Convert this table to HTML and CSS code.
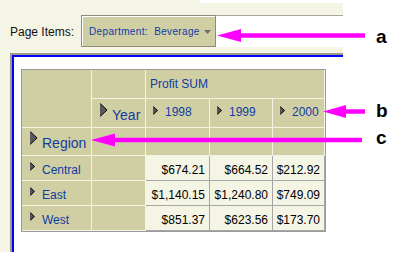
FILE: index.html
```html
<!DOCTYPE html>
<html>
<head>
<meta charset="utf-8">
<link rel="stylesheet" href="styles.css">
</head>
<body>
<div class="screen">
  <div class="page-items">
    <span class="pi-label">Page Items:</span>
    <div class="pi-box">
      <span class="pi-text">Department:&nbsp; Beverage</span>
      <svg class="pi-caret" width="7" height="4" viewBox="0 0 7 4"><polygon points="0,0 7,0 3.5,4" fill="#6e6e6e"/></svg>
    </div>
  </div>
  <div class="panel">
    <div class="panel-inner">
      <table class="pivot">
        <colgroup><col class="c1"><col class="c2"><col class="c3"><col class="c4"><col class="c5"></colgroup>
        <tr class="r-h">
          <td class="hd" rowspan="2"></td>
          <td class="hd"></td>
          <td class="hd measure" colspan="3">Profit SUM</td>
        </tr>
        <tr class="r-h">
          <td class="hd dim"><svg class="tri-lg" width="8" height="14" viewBox="0 0 8 14"><polygon points="0,0 7.5,7 0,14" fill="#5a5a5a"/><polyline points="0.5,0.8 7,7 0.5,13.2" fill="none" stroke="#111" stroke-width="1"/></svg>Year</td>
          <td class="hd year"><svg class="tri-sm" width="5" height="9" viewBox="0 0 5 9"><polygon points="0,0 5,4.5 0,9" fill="#555"/><polyline points="0.5,0.8 4.5,4.5 0.5,8.2" fill="none" stroke="#111" stroke-width="1"/></svg>1998</td>
          <td class="hd year"><svg class="tri-sm" width="5" height="9" viewBox="0 0 5 9"><polygon points="0,0 5,4.5 0,9" fill="#555"/><polyline points="0.5,0.8 4.5,4.5 0.5,8.2" fill="none" stroke="#111" stroke-width="1"/></svg>1999</td>
          <td class="hd year"><svg class="tri-sm" width="5" height="9" viewBox="0 0 5 9"><polygon points="0,0 5,4.5 0,9" fill="#555"/><polyline points="0.5,0.8 4.5,4.5 0.5,8.2" fill="none" stroke="#111" stroke-width="1"/></svg>2000</td>
        </tr>
        <tr class="r-reg">
          <td class="hd dim"><svg class="tri-lg" width="8" height="14" viewBox="0 0 8 14"><polygon points="0,0 7.5,7 0,14" fill="#5a5a5a"/><polyline points="0.5,0.8 7,7 0.5,13.2" fill="none" stroke="#111" stroke-width="1"/></svg>Region</td>
          <td class="hd"></td><td class="hd"></td><td class="hd"></td><td class="hd"></td>
        </tr>
        <tr class="r-d">
          <td class="hd row"><svg class="tri-sm" width="5" height="9" viewBox="0 0 5 9"><polygon points="0,0 5,4.5 0,9" fill="#555"/><polyline points="0.5,0.8 4.5,4.5 0.5,8.2" fill="none" stroke="#111" stroke-width="1"/></svg>Central</td>
          <td class="hd"></td>
          <td class="num">$674.21</td><td class="num">$664.52</td><td class="num">$212.92</td>
        </tr>
        <tr class="r-d">
          <td class="hd row"><svg class="tri-sm" width="5" height="9" viewBox="0 0 5 9"><polygon points="0,0 5,4.5 0,9" fill="#555"/><polyline points="0.5,0.8 4.5,4.5 0.5,8.2" fill="none" stroke="#111" stroke-width="1"/></svg>East</td>
          <td class="hd"></td>
          <td class="num">$1,140.15</td><td class="num">$1,240.80</td><td class="num">$749.09</td>
        </tr>
        <tr class="r-d">
          <td class="hd row"><svg class="tri-sm" width="5" height="9" viewBox="0 0 5 9"><polygon points="0,0 5,4.5 0,9" fill="#555"/><polyline points="0.5,0.8 4.5,4.5 0.5,8.2" fill="none" stroke="#111" stroke-width="1"/></svg>West</td>
          <td class="hd"></td>
          <td class="num">$851.37</td><td class="num">$623.56</td><td class="num">$173.70</td>
        </tr>
      </table>
    </div>
  </div>
</div>
<div class="patch-top"></div>
<div class="patch-a"></div>
<svg class="arrows" width="401" height="254" viewBox="0 0 401 254">
  <line x1="238" y1="35.5" x2="365" y2="35.5" stroke="#ff00ff" stroke-width="4.5"/>
  <polygon points="217,35.5 241,29 241,42" fill="#ff00ff"/>
  <line x1="344" y1="111.5" x2="365" y2="111.5" stroke="#ff00ff" stroke-width="4.5"/>
  <polygon points="323,111.5 346,105 346,118" fill="#ff00ff"/>
  <line x1="113" y1="140" x2="362" y2="140" stroke="#ff00ff" stroke-width="4.5"/>
  <polygon points="91,140 115,133.5 115,146.5" fill="#ff00ff"/>
</svg>
<span class="note note-a">a</span>
<span class="note note-b">b</span>
<span class="note note-c">c</span>
</body>
</html>
```

FILE: styles.css
```css
html, body {
  margin: 0;
  padding: 0;
  background: #ffffff;
}

body {
  position: relative;
  width: 401px;
  height: 254px;
  overflow: hidden;
  font-family: "Liberation Sans", Arial, sans-serif;
}

.screen {
  width: 343px;
  height: 252px;
  background: #f5f5e6;
  overflow: hidden;
}

.page-items {
  display: flex;
  align-items: center;
  padding: 15px 0 0 10px;
  height: 32px;
}

.pi-label {
  font-size: 12px;
  line-height: 14px;
  color: #111;
  margin-right: 7px;
  padding-top: 1px;
}

.pi-box {
  display: flex;
  align-items: center;
  box-sizing: border-box;
  width: 135px;
  height: 32px;
  border: 1px solid #8d8c76;
  box-shadow: inset 1px 1px 0 #ffffff;
  background: #d0cfa3;
  padding-left: 7px;
}

.pi-text {
  font-size: 10px;
  letter-spacing: 0.35px;
  line-height: 12px;
  color: #0f3ba3;
  white-space: nowrap;
  padding-top: 1px;
}

.pi-caret {
  margin-left: auto;
  margin-right: 4px;
  margin-top: 1px;
}

.panel {
  margin: 6px 0 0 10px;
  width: 400px;
  height: 200px;
  border-top: 2px solid #9d9c85;
  border-left: 2px solid #9d9c85;
}

.panel-inner {
  height: 100%;
  border-top: 2px solid #0000ff;
  border-left: 2px solid #0000ff;
  background: #ffffff;
  padding: 12px 0 0 7px;
  box-sizing: border-box;
}

.pivot {
  table-layout: fixed;
  width: 305px;
  border-collapse: separate;
  border-spacing: 0;
  border: 1px solid #9a9a9a;
  font-size: 12px;
  line-height: 14px;
}

.c1 { width: 70px; }
.c2 { width: 54px; }
.c3 { width: 64px; }
.c4 { width: 63px; }
.c5 { width: 52px; }

.pivot td {
  padding: 0;
  white-space: nowrap;
  overflow: hidden;
}

.r-h { height: 29px; }
.r-reg { height: 28px; }
.r-d { height: 25px; }

.hd {
  background: #d0cfa3;
  color: #0f3ba3;
  border-right: 1px solid #f4f4e4;
  border-bottom: 1px solid #f4f4e4;
}

.num {
  background: #f5f5e6;
  color: #000;
  text-align: right;
  padding-right: 4px !important;
  vertical-align: bottom;
  padding-bottom: 3px !important;
  border-right: 1px solid #a6a6a6;
  border-bottom: 1px solid #a6a6a6;
}

.measure {
  vertical-align: middle;
  padding-left: 4px !important;
}

.dim {
  font-size: 14px;
  line-height: 16px;
  vertical-align: bottom;
  padding-left: 8px !important;
  padding-bottom: 4px !important;
}

.year {
  vertical-align: middle;
  padding-left: 7px !important;
  padding-bottom: 2px !important;
}

.row {
  vertical-align: bottom;
  padding-left: 8px !important;
  padding-bottom: 3px !important;
}

.tri-lg {
  vertical-align: 3px;
  margin-right: 4px;
}

.tri-sm {
  margin-right: 7px;
}

.year .tri-sm { vertical-align: 1px; }
.row .tri-sm { vertical-align: 3px; }

.patch-top {
  position: absolute;
  left: 200px;
  top: 0;
  width: 143px;
  height: 3px;
  background: #ffffff;
}

.patch-a {
  position: absolute;
  left: 216px;
  top: 15px;
  width: 127px;
  height: 31px;
  border-top: 1px solid #a8a792;
  background: #ffffff;
}

.arrows {
  position: absolute;
  left: 0;
  top: 0;
}

.note {
  position: absolute;
  left: 376px;
  font-size: 19px;
  line-height: 19px;
  font-weight: bold;
  color: #000;
}

.note-a { top: 27px; }
.note-b { top: 101px; }
.note-c { top: 128px; }
```
